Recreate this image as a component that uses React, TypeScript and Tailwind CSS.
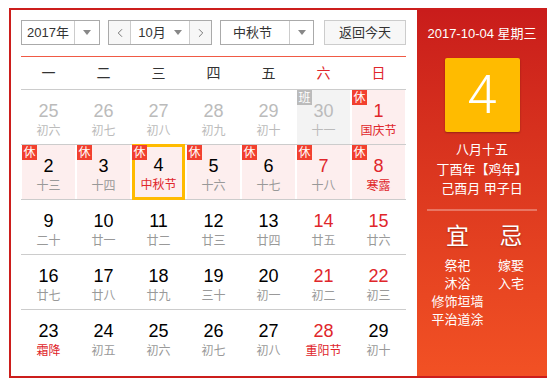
import { ChevronLeft, ChevronRight } from 'lucide-react';

type Day = {
  n: number;
  lunar: string;
  dim?: boolean;
  redNum?: boolean;
  redText?: boolean;
  badge?: '休' | '班';
  selected?: boolean;
};

const weeks: Day[][] = [
  [
    { n: 25, lunar: '初六', dim: true },
    { n: 26, lunar: '初七', dim: true },
    { n: 27, lunar: '初八', dim: true },
    { n: 28, lunar: '初九', dim: true },
    { n: 29, lunar: '初十', dim: true },
    { n: 30, lunar: '十一', dim: true, badge: '班' },
    { n: 1, lunar: '国庆节', redNum: true, redText: true, badge: '休' },
  ],
  [
    { n: 2, lunar: '十三', badge: '休' },
    { n: 3, lunar: '十四', badge: '休' },
    { n: 4, lunar: '中秋节', redText: true, badge: '休', selected: true },
    { n: 5, lunar: '十六', badge: '休' },
    { n: 6, lunar: '十七', badge: '休' },
    { n: 7, lunar: '十八', redNum: true, badge: '休' },
    { n: 8, lunar: '寒露', redNum: true, redText: true, badge: '休' },
  ],
  [
    { n: 9, lunar: '二十' },
    { n: 10, lunar: '廿一' },
    { n: 11, lunar: '廿二' },
    { n: 12, lunar: '廿三' },
    { n: 13, lunar: '廿四' },
    { n: 14, lunar: '廿五', redNum: true },
    { n: 15, lunar: '廿六', redNum: true },
  ],
  [
    { n: 16, lunar: '廿七' },
    { n: 17, lunar: '廿八' },
    { n: 18, lunar: '廿九' },
    { n: 19, lunar: '三十' },
    { n: 20, lunar: '初一' },
    { n: 21, lunar: '初二', redNum: true },
    { n: 22, lunar: '初三', redNum: true },
  ],
  [
    { n: 23, lunar: '霜降', redText: true },
    { n: 24, lunar: '初五' },
    { n: 25, lunar: '初六' },
    { n: 26, lunar: '初七' },
    { n: 27, lunar: '初八' },
    { n: 28, lunar: '重阳节', redNum: true, redText: true },
    { n: 29, lunar: '初十' },
  ],
];

const weekdays = ['一', '二', '三', '四', '五', '六', '日'];

function Caret() {
  return <span className="w-0 h-0 border-x-[4px] border-x-transparent border-t-[5px] border-t-[#888]" />;
}

function Cell({ d }: { d: Day }) {
  let bg = 'bg-white';
  if (d.badge === '休') bg = 'bg-[#fdeeee]';
  if (d.badge === '班') bg = 'bg-[#f3f3f3]';
  const numColor = d.dim ? 'text-[#bbb]' : d.redNum ? 'text-[#e0262b]' : 'text-black';
  const textColor = d.redText ? 'text-[#e0262b]' : d.dim ? 'text-[#bbb]' : 'text-[#999]';
  return (
    <div className={`relative mx-px flex flex-col items-center ${bg} ${d.selected ? 'border-[3px] border-[#ffbb00] -my-px' : ''}`}>
      {d.badge && (
        <span
          className={`absolute ${d.selected ? '-left-[3px] -top-[2px]' : 'left-0 top-0'} w-[15px] h-[15px] flex items-center justify-center text-[12px] leading-none text-white ${
            d.badge === '休' ? 'bg-[#f2402f]' : 'bg-[#bbb]'
          }`}
        >
          {d.badge}
        </span>
      )}
      <div className={`${d.selected ? 'mt-[8px]' : 'mt-[11px]'} text-[18px] leading-[20px] ${numColor}`}>{d.n}</div>
      <div className={`mt-[2px] text-[12px] leading-[16px] ${textColor}`}>{d.lunar}</div>
    </div>
  );
}

export default function App() {
  return (
    <div className="w-[552px] h-[383px] bg-white pt-[8px] pl-[9px] font-['Liberation_Sans','Noto_Sans_CJK_SC',sans-serif]">
      <div className="w-[538px] h-[370px] border-2 border-r-0 border-[#cc1e1c] flex">
        {/* Left: calendar */}
        <div className="w-[406px] pl-[10px] pr-[11px] pt-[10px]">
          <div className="flex items-center h-[25px] text-[13px] text-[#333]">
            <div className="w-[79px] h-full border border-[#aaa] flex">
              <div className="flex-1 flex items-center justify-center border-r border-[#ccc]">2017年</div>
              <div className="w-[24px] flex items-center justify-center"><Caret /></div>
            </div>
            <div className="ml-[8px] w-[104px] h-full border border-[#aaa] flex">
              <div className="w-[22px] bg-[#f7f7f7] flex items-center justify-center border-r border-[#ccc] text-[#666]">
                <ChevronLeft className="w-3.5 h-3.5" strokeWidth={1.5} />
              </div>
              <div className="flex-1 flex items-center justify-center gap-2">
                <span>10月</span>
                <Caret />
              </div>
              <div className="w-[22px] bg-[#f7f7f7] flex items-center justify-center border-l border-[#ccc] text-[#666]">
                <ChevronRight className="w-3.5 h-3.5" strokeWidth={1.5} />
              </div>
            </div>
            <div className="ml-[8px] w-[94px] h-full border border-[#aaa] flex">
              <div className="flex-1 flex items-center pl-[12px] border-r border-[#ccc]">中秋节</div>
              <div className="w-[23px] flex items-center justify-center"><Caret /></div>
            </div>
            <div className="ml-[10px] w-[82px] h-full border border-[#ccc] bg-[#f7f7f7] flex items-center justify-center">
              返回今天
            </div>
          </div>
          <div className="mt-[11px] h-px bg-[#f05a45]" />
          <div className="grid grid-cols-7 h-[33px] items-center text-[14px] border-b border-[#ccc]">
            {weekdays.map((w, i) => (
              <div key={w} className={`text-center ${i >= 5 ? 'text-[#e0262b]' : 'text-[#333]'}`}>
                {w}
              </div>
            ))}
          </div>
          {weeks.map((row, ri) => (
            <div key={ri} className={`grid grid-cols-7 h-[55px] ${ri < 4 ? 'border-b border-[#ccc]' : ''}`}>
              {row.map((d, ci) => (
                <Cell key={ci} d={d} />
              ))}
            </div>
          ))}
        </div>

        {/* Right: today panel */}
        <div className="w-[130px] h-full bg-gradient-to-b from-[#c91c1b] to-[#f25124] flex flex-col items-center text-white">
          <div className="mt-[16px] text-[13px] leading-[16px]">2017-10-04 星期三</div>
          <div className="mt-[16px] w-[75px] h-[74px] rounded-[2px] bg-[#ffbb00] shadow-[0_1px_2px_rgba(0,0,0,0.3)] flex items-center justify-center font-['Roboto',sans-serif] font-light text-[53px] leading-none">
            4
          </div>
          <div className="mt-[8px] flex flex-col items-center text-[13px] leading-[19.5px]">
            <div>八月十五</div>
            <div>丁酉年【鸡年】</div>
            <div>己酉月 甲子日</div>
          </div>
          <div className="mt-[10px] w-[110px] h-[2px] bg-white/30" />
          <div className="mt-[12px] w-full flex text-[13px] leading-[18px]">
            <div className="w-[68px] pl-[13px] flex flex-col items-center">
              <div className="text-[23px] leading-[26px] mb-[8px] [text-shadow:0_1px_2px_rgba(0,0,0,0.3)]">宜</div>
              <div>祭祀</div>
              <div>沐浴</div>
              <div>修饰垣墙</div>
              <div>平治道涂</div>
            </div>
            <div className="flex-1 pr-[10px] flex flex-col items-center">
              <div className="text-[23px] leading-[26px] mb-[8px] [text-shadow:0_1px_2px_rgba(0,0,0,0.3)]">忌</div>
              <div>嫁娶</div>
              <div>入宅</div>
            </div>
          </div>
        </div>
      </div>
    </div>
  );
}
